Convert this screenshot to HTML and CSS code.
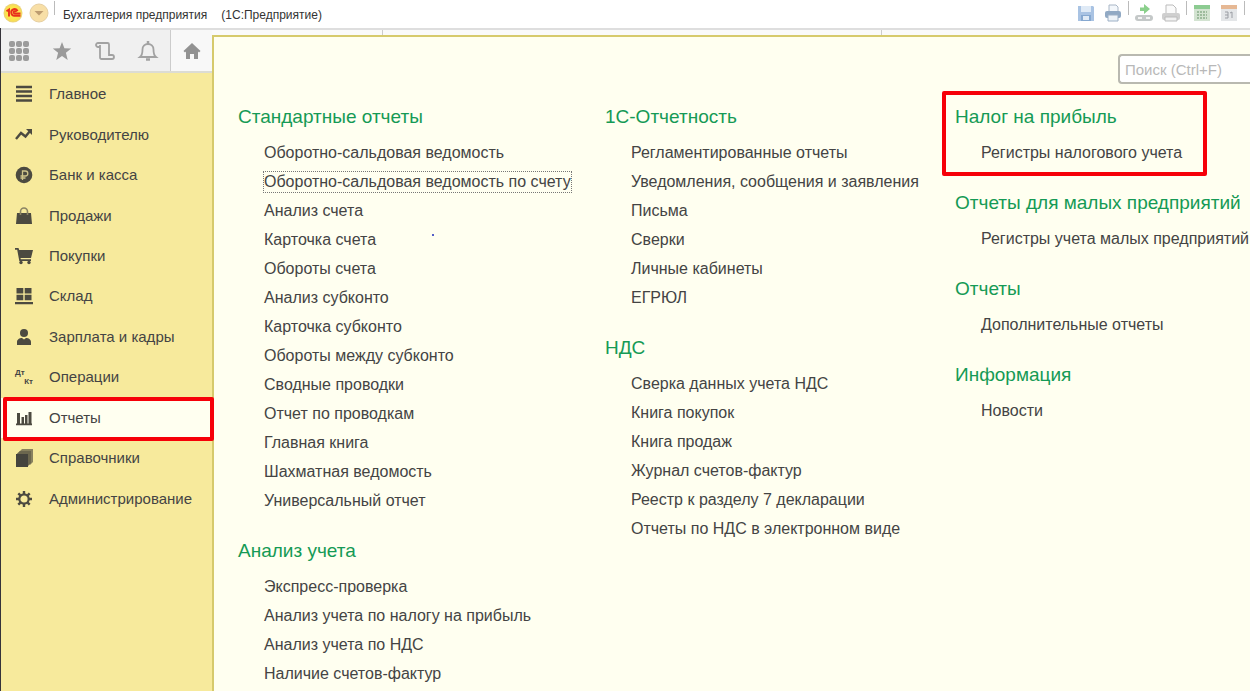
FILE: index.html
```html
<!DOCTYPE html>
<html lang="ru">
<head>
<meta charset="utf-8">
<title>Бухгалтерия предприятия</title>
<link rel="stylesheet" href="styles.css">
</head>
<body>
<header class="titlebar">
  <svg class="logo" viewBox="0 0 20 20" aria-hidden="true"><defs><radialGradient id="g"><stop offset="0" stop-color="#ffef5a"/><stop offset=".75" stop-color="#fbe34b"/><stop offset="1" stop-color="#e9cf7c"/></radialGradient></defs><circle cx="10" cy="10" r="9.5" fill="url(#g)"/><path d="M3.500 8.200 6 6.600V13.500M14.600 8.200a3.300 3.300 0 1 0-3 4.500H17.500M13 9a1.200 1.200 0 1 0-1.300 1.500H17.500" fill="none" stroke="#e8301c" stroke-width="1.900"/></svg>
  <button class="round" aria-label="Меню"><svg viewBox="0 0 20 20"><circle cx="10" cy="10" r="9" fill="#f8dfa6" stroke="#e6cfa0"/><path d="M5.500 8h9L10 12.500z" fill="#bd9c70"/></svg></button>
  <span class="sep"></span>
  <h1 class="title"><span>Бухгалтерия предприятия</span><span>(1С:Предприятие)</span></h1>
  <div class="tools">
    <button aria-label="Сохранить"><svg viewBox="0 0 18 18"><path d="M1 2h15l1 1v14H1z" fill="#a9c3e3"/><path d="M4 2h10v6H4z" fill="#dfeaf6"/><path d="M4 11h10v6H4z" fill="#86a8d0"/><path d="M6 12h6v4H6z" fill="#dfeaf6"/></svg></button>
    <button aria-label="Печать"><svg viewBox="0 0 18 18"><path d="M5 1h7l2 2v5H5z" fill="#f3f7fb" stroke="#a9b6c6"/><rect x="1" y="7" width="16" height="7" rx="2" fill="#91a9c4"/><path d="M4 11h10v6H4z" fill="#eef3f8" stroke="#9db0c6"/></svg></button>
    <span class="sep"></span>
    <button aria-label="Получить ссылку"><svg viewBox="0 0 18 18"><path d="M5 3.500h4V0l6 5-6 5V7H5z" fill="#8bd08c"/><rect x="0" y="11" width="18" height="6" rx="3" fill="#c4c8c8"/><path d="M3 14h4m4 0h4" stroke="#f4f4f4" stroke-width="2"/></svg></button>
    <button aria-label="Предварительный просмотр"><svg viewBox="0 0 18 18"><path d="M4 1h7l3 3v6H4z" fill="#fafafa" stroke="#bbb"/><rect x="0" y="9" width="18" height="7" rx="2" fill="#cfcfcf"/><path d="M3 13h12v4H3z" fill="#f2f2f2" stroke="#bbb"/></svg></button>
    <span class="sep"></span>
    <button aria-label="Калькулятор"><svg viewBox="0 0 18 18"><path d="M1 1h16v16H1z" fill="#d3e3d1"/><path d="M1 1h16v4H1z" fill="#8ccb91"/><path d="M4 8h10M4 11h10M4 14h10" stroke="#9dbb9d" stroke-dasharray="2 1" stroke-width="2"/></svg></button>
    <button aria-label="Календарь"><svg viewBox="0 0 18 18"><path d="M1 1h16v16H1z" fill="#e4e6e8"/><path d="M1 1h16v4H1z" fill="#e6b894"/><path d="M5 8h3v6M5 11h3M5 14h3M10 9l2-1v6" fill="none" stroke="#9a9da3"/></svg></button>
    <span class="sep"></span>
  </div>
</header>
<div class="workspace">
  <aside class="side">
    <div class="quick">
      <button aria-label="Все функции"><svg viewBox="0 0 22 22" fill="#9c9c9c"><rect x="1" y="1" width="6" height="6" rx="2"/><rect x="8" y="1" width="6" height="6" rx="2"/><rect x="15" y="1" width="6" height="6" rx="2"/><rect x="1" y="8" width="6" height="6" rx="2"/><rect x="8" y="8" width="6" height="6" rx="2"/><rect x="15" y="8" width="6" height="6" rx="2"/><rect x="1" y="15" width="6" height="6" rx="2"/><rect x="8" y="15" width="6" height="6" rx="2"/><rect x="15" y="15" width="6" height="6" rx="2"/></svg></button>
      <button aria-label="Избранное"><svg viewBox="0 0 22 22"><path d="m11 2 2.400 6.300 6.800.3-5.300 4.200L16.700 20 11 15.900 5.300 20l1.800-7.200-5.300-4.200 6.800-.3z" fill="#9a9a9a"/></svg></button>
      <button aria-label="История"><svg viewBox="0 0 22 22" fill="none" stroke="#a2a2a2" stroke-width="1.800"><path d="M5.500 7H4a1.800 1.800 0 0 1 0-4h9.500A1.500 1.500 0 0 1 15 4.500V15h3a2 2 0 0 1 0 4H7.500A1.500 1.500 0 0 1 6 17.500V5"/></svg></button>
      <button aria-label="Уведомления"><svg viewBox="0 0 22 22" fill="none" stroke="#a2a2a2" stroke-width="1.800"><path d="M3 17c2-1.500 2.500-3 2.500-7.500C5.500 6 8 4 11 4s5.500 2 5.500 5.500c0 4.500.5 6 2.500 7.500z"/><path d="M11 1v3M9 19.500h4" stroke-width="2.500"/></svg></button>
      <button class="home" aria-label="Начальная страница"><svg viewBox="0 0 22 22"><path d="m11 3 8.500 8-1.500 1.500-1-1V19h-4v-5H9v5H5v-7.500l-1 1L2.500 11z" fill="#929292"/></svg></button>
    </div>
    <nav>
      <ul class="menu">
        <li><a href="#"><svg viewBox="0 0 18 18"><path d="M1 2h16M1 6.500h16M1 11h16M1 15.500h16" stroke="#4c4a40" stroke-width="2.600"/></svg>Главное</a></li>
        <li><a href="#"><svg viewBox="0 0 18 18"><path d="m1 13 5-6 4.500 3.500L15 5" fill="none" stroke="#4c4a40" stroke-width="2.400"/><path d="M11 3h6v6z" fill="#4c4a40"/></svg>Руководителю</a></li>
        <li><a href="#"><svg viewBox="0 0 18 18"><circle cx="9" cy="9" r="8.300" fill="#4c4a40"/><path d="M7.500 14V5h2.800a2.500 2.500 0 0 1 0 5H5.500M5.500 12h5" fill="none" stroke="#cfc48a" stroke-width="1.300"/></svg>Банк и касса</a></li>
        <li><a href="#"><svg viewBox="0 0 18 18"><path d="M2 6h14l1 11H1z" fill="#4c4a40"/><path d="M5.500 8V4.500a3.500 3.500 0 0 1 7 0V8" fill="none" stroke="#8b8464" stroke-width="1.600"/></svg>Продажи</a></li>
        <li><a href="#"><svg viewBox="0 0 18 18" fill="#4c4a40"><path d="M0 1h3.500l.7 2H18l-2 8H5.500l.3 1.300H16V14H4.300L2.200 2.800H0z"/><circle cx="6" cy="15.500" r="1.700"/><circle cx="14" cy="15.500" r="1.700"/></svg>Покупки</a></li>
        <li><a href="#"><svg viewBox="0 0 18 18" fill="#4c4a40"><path d="M1.500 1h6.800v5.500H1.500zM9.700 1h6.800v5.500H9.700zM1.500 7.800h6.800v5.500H1.500zM9.700 7.800h6.800v5.500H9.700zM0 15h18v2.200H0z"/></svg>Склад</a></li>
        <li><a href="#"><svg viewBox="0 0 18 18" fill="#4c4a40"><circle cx="9" cy="5" r="4"/><path d="M2 17v-3c0-2.500 2.500-4 5-4l2 1.500 2-1.500c2.500 0 5 1.500 5 4v3z"/></svg>Зарплата и кадры</a></li>
        <li><a href="#"><span class="dtkt" aria-hidden="true"><b>Дт</b><b>Кт</b></span>Операции</a></li>
        <li class="current"><a href="#" aria-current="page"><svg viewBox="0 0 18 18" fill="#4c4a40"><path d="M2 4h3v11H2zM6.500 8h2.500v7H6.500zM10 6h2.500v9H10zM13.500 3h3v12h-3zM1 14.500h16v1.800H1z"/></svg>Отчеты</a></li>
        <li><a href="#"><svg viewBox="0 0 18 18"><path d="M4 3 7 0h11v13l-3 3z" fill="#89825f"/><path d="M2 4.500 5 2h11v12l-3 3" fill="#6c674e"/><path d="M1 5h12v13H1z" fill="#45443d"/></svg>Справочники</a></li>
        <li><a href="#"><svg viewBox="0 0 18 18" fill="none" stroke="#4c4a40"><circle cx="9" cy="9" r="4.700" stroke-width="2.200"/><path d="M9 1v3M9 14v3M1 9h3M14 9h3M3.300 3.300l2.100 2.100M12.600 12.600l2.100 2.100M3.300 14.700l2.100-2.100M12.600 5.400l2.100-2.100" stroke-width="2.400"/></svg>Администрирование</a></li>
      </ul>
    </nav>
  </aside>
  <div class="content">
    <div class="tabs"><span class="tab tab-first"></span><span class="tab tab-wide"></span><span class="tab"></span></div>
    <main class="panel">
      <div class="searchbar"><input class="search" type="search" placeholder="Поиск (Ctrl+F)" aria-label="Поиск"></div>
      <div class="columns">
        <div class="column">
          <section class="group">
            <h2>Стандартные отчеты</h2>
            <ul>
              <li><a href="#">Оборотно-сальдовая ведомость</a></li>
              <li><a href="#" class="focused">Оборотно-сальдовая ведомость по счету</a></li>
              <li><a href="#">Анализ счета</a></li>
              <li><a href="#">Карточка счета</a></li>
              <li><a href="#">Обороты счета</a></li>
              <li><a href="#">Анализ субконто</a></li>
              <li><a href="#">Карточка субконто</a></li>
              <li><a href="#">Обороты между субконто</a></li>
              <li><a href="#">Сводные проводки</a></li>
              <li><a href="#">Отчет по проводкам</a></li>
              <li><a href="#">Главная книга</a></li>
              <li><a href="#">Шахматная ведомость</a></li>
              <li><a href="#">Универсальный отчет</a></li>
            </ul>
            <span class="dot"></span>
          </section>
          <section class="group">
            <h2>Анализ учета</h2>
            <ul>
              <li><a href="#">Экспресс-проверка</a></li>
              <li><a href="#">Анализ учета по налогу на прибыль</a></li>
              <li><a href="#">Анализ учета по НДС</a></li>
              <li><a href="#">Наличие счетов-фактур</a></li>
            </ul>
          </section>
        </div>
        <div class="column">
          <section class="group">
            <h2>1С-Отчетность</h2>
            <ul>
              <li><a href="#">Регламентированные отчеты</a></li>
              <li><a href="#">Уведомления, сообщения и заявления</a></li>
              <li><a href="#">Письма</a></li>
              <li><a href="#">Сверки</a></li>
              <li><a href="#">Личные кабинеты</a></li>
              <li><a href="#">ЕГРЮЛ</a></li>
            </ul>
          </section>
          <section class="group">
            <h2>НДС</h2>
            <ul>
              <li><a href="#">Сверка данных учета НДС</a></li>
              <li><a href="#">Книга покупок</a></li>
              <li><a href="#">Книга продаж</a></li>
              <li><a href="#">Журнал счетов-фактур</a></li>
              <li><a href="#">Реестр к разделу 7 декларации</a></li>
              <li><a href="#">Отчеты по НДС в электронном виде</a></li>
            </ul>
          </section>
        </div>
        <div class="column">
          <section class="group marked">
            <h2>Налог на прибыль</h2>
            <ul><li><a href="#">Регистры налогового учета</a></li></ul>
          </section>
          <section class="group">
            <h2>Отчеты для малых предприятий</h2>
            <ul><li><a href="#">Регистры учета малых предприятий</a></li></ul>
          </section>
          <section class="group">
            <h2>Отчеты</h2>
            <ul><li><a href="#">Дополнительные отчеты</a></li></ul>
          </section>
          <section class="group">
            <h2>Информация</h2>
            <ul><li><a href="#">Новости</a></li></ul>
          </section>
        </div>
      </div>
    </main>
  </div>
</div>
</body>
</html>
```

FILE: styles.css
```css
* { box-sizing: border-box; }

body {
  margin: 0;
  height: 100vh;
  overflow: hidden;
  display: flex;
  flex-direction: column;
  background: #fff;
  color: #444;
  font: 16px/20px "Liberation Sans", Arial, sans-serif;
}

ul { list-style: none; margin: 0; padding: 0; }
a { color: inherit; text-decoration: none; }
button { border: 0; padding: 0; background: none; display: flex; }
svg { display: block; flex: none; }

/* Title bar */
.titlebar {
  display: flex;
  align-items: center;
  height: 28px;
  padding: 0 8px 2px 3px;
  flex: none;
}
.logo, .round svg { width: 20px; height: 20px; }
.round { margin-left: 6px; }
.sep { width: 1px; height: 14px; background: #bbb; align-self: flex-start; margin: 1px 0 0 5px; }
.title {
  display: flex;
  gap: 14px;
  margin: 3px 0 0 8px;
  font-size: 12px;
  line-height: 16px;
  font-weight: 400;
  color: #333;
  white-space: nowrap;
}
.tools { display: flex; align-items: center; gap: 9px; margin-left: auto; height: 26px; }
.tools svg { width: 18px; height: 18px; }
.tools .sep { margin: 1px -3px 0; }

/* Workspace */
.workspace { flex: 1; min-height: 0; display: grid; grid-template-columns: 212px minmax(0, 1fr); }
.side {
  display: flex;
  flex-direction: column;
  background: #f7ea9c;
  border-left: 1px solid #35333a;
}
.quick {
  display: flex;
  align-items: center;
  height: 45px;
  padding-left: 7px;
  gap: 21px;
  background: #f0f0f0;
  border-top: 2px solid #dedede;
  border-bottom: 2px solid #dcdcd4;
}
.quick svg { width: 22px; height: 22px; }
.home { flex: 1; align-self: stretch; align-items: center; padding-left: 10px; margin-left: -10px; background: #f8f8f8; border-left: 1px solid #ccc; }

.menu { display: grid; grid-auto-rows: 1fr; min-height: 446px; padding-top: 1px; font-size: 15px; }
.menu li { display: flex; position: relative; }
.menu a { flex: 1; display: flex; align-items: center; gap: 16px; padding-left: 14px; }
.menu svg, .dtkt { width: 18px; height: 18px; }
.dtkt { display: flex; flex-direction: column; font-size: 8px; line-height: 9px; }
.dtkt b:last-child { align-self: flex-end; }
.current { background: #fffff0; }
.current::after {
  content: "";
  position: absolute;
  inset: -1px -2px -3px 2px;
  border: 4px solid #f60008;
  border-radius: 2px;
  z-index: 2;
}

/* Reports panel */
.content { display: flex; flex-direction: column; min-width: 0; }
.tabs { display: flex; height: 7px; background: #fafafa; border-top: 2px solid #dedede; }
.tab { flex: 368; border-left: 1px solid #ccc; }
.tab-first { flex: 170; border: 0; }
.tab-wide { flex: 498; }
.panel {
  flex: 1;
  min-height: 0;
  background: #fffff0;
  border-top: 2px solid #d6ca6c;
  border-left: 2px solid #d6ca6c;
}
.searchbar { display: flex; justify-content: flex-end; padding-top: 17px; }
.search {
  width: 132px;
  height: 30px;
  padding: 0 5px;
  border: 2px solid #b9b9b0;
  border-right: 0;
  border-radius: 4px 0 0 4px;
  background: #fff;
  font: inherit;
  font-size: 15px;
}
.search::placeholder { color: #b8b8b8; }
.columns {
  display: grid;
  grid-template-columns: 367fr 350fr 295fr;
  padding: 22px 0 0 24px;
}
.column { display: flex; flex-direction: column; gap: 25px; min-width: 0; }
.group { position: relative; }
.group h2 {
  margin: 0 0 10px;
  font-size: 19px;
  line-height: 22px;
  font-weight: 400;
  color: #159a55;
  white-space: nowrap;
}
.group li { display: flex; align-items: center; height: 29px; padding-left: 26px; white-space: nowrap; }
.focused { outline: 1px dotted #777; }
.dot { position: absolute; left: 194px; top: 128px; width: 2px; height: 2px; background: #5560c8; }
.marked::after {
  content: "";
  position: absolute;
  inset: -15px 43px -9px -13px;
  border: 4px solid #f60008;
  border-radius: 2px;
  pointer-events: none;
}
```
